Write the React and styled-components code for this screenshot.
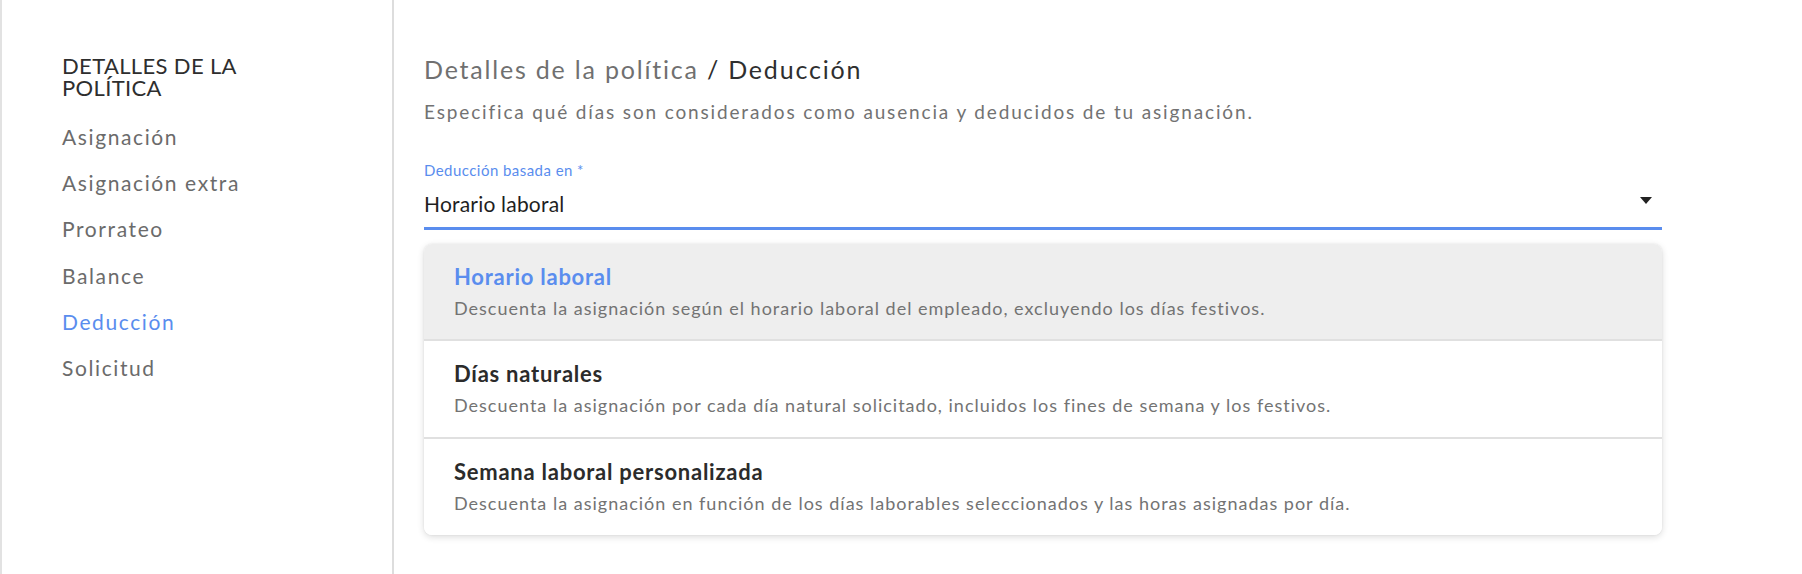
import React from "react";
import styled, { createGlobalStyle } from "styled-components";

const BLUE = "#5a8dee";

const GlobalStyle = createGlobalStyle`
  html, body, #root {
    height: 100%;
  }
  body {
    margin: 0;
    background: #ffffff;
    font-family: Lato, "Noto Sans", sans-serif;
    -webkit-font-smoothing: antialiased;
  }
`;

const Page = styled.div`
  display: flex;
  height: 100%;
  border-left: 2px solid #e2e2e2;
  box-sizing: border-box;
`;

const Sidebar = styled.aside`
  flex-shrink: 0;
  width: 330px;
  border-right: 2px solid #dddddd;
  padding: 55px 0 0 60px;
`;

const SideHeading = styled.h3`
  margin: 0 0 15px;
  width: 200px;
  font-size: 22px;
  line-height: 22px;
  font-weight: 400;
  letter-spacing: 0.35px;
  color: #2e2e2e;
`;

const NavList = styled.nav`
  display: flex;
  flex-direction: column;
`;

const NavItem = styled.a`
  display: block;
  height: 46.2px;
  font-size: 21px;
  line-height: 46.2px;
  letter-spacing: 1.6px;
  color: ${({ $active }) => ($active ? BLUE : "#6b6b6b")};
  cursor: pointer;
`;

const Main = styled.main`
  flex: 1;
  padding: 53px 0 0 30px;
`;

const Content = styled.div`
  width: 1238px;
`;

const Title = styled.h1`
  margin: 0;
  font-size: 25px;
  line-height: 32px;
  font-weight: 400;
  letter-spacing: 1.8px;
  color: #2f2f2f;
`;

const Crumb = styled.span`
  color: #707070;
`;

const Subtitle = styled.p`
  margin: 14px 0 0;
  font-size: 19px;
  line-height: 26px;
  letter-spacing: 1.85px;
  color: #727272;
`;

const Field = styled.div`
  margin-top: 35px;
  border-bottom: 3px solid ${BLUE};
  padding-bottom: 9px;
`;

const FieldLabel = styled.label`
  display: block;
  font-size: 15px;
  line-height: 20px;
  letter-spacing: 0.45px;
  color: ${BLUE};
`;

const ValueRow = styled.div`
  display: flex;
  align-items: center;
  justify-content: space-between;
  margin-top: 10px;
  padding-right: 10px;
`;

const Value = styled.span`
  font-size: 21px;
  line-height: 28px;
  letter-spacing: 0.2px;
  color: #1f1f1f;
`;

const Caret = styled.svg`
  width: 12px;
  height: 7px;
  margin-top: -8px;
  fill: #222222;
`;

const Menu = styled.ul`
  list-style: none;
  margin: 14px 0 0;
  padding: 0;
  background: #ffffff;
  border-radius: 8px;
  overflow: hidden;
  box-shadow: 0 2px 7px rgba(0, 0, 0, 0.14), 0 0 2px rgba(0, 0, 0, 0.08);
`;

const Option = styled.li`
  height: 95px;
  box-sizing: border-box;
  padding: 20px 30px 0;
  background: ${({ $selected }) => ($selected ? "#eeeeee" : "#ffffff")};
  & + & {
    border-top: 2px solid #e0e0e0;
    height: 98px;
  }
`;

const OptionTitle = styled.div`
  font-size: 22px;
  line-height: 26px;
  font-weight: 700;
  letter-spacing: 0.75px;
  color: ${({ $selected }) => ($selected ? BLUE : "#2b2b2b")};
`;

const OptionDesc = styled.div`
  margin-top: 6px;
  font-size: 18px;
  line-height: 24px;
  letter-spacing: 1px;
  color: #737373;
`;

const navItems = [
  "Asignación",
  "Asignación extra",
  "Prorrateo",
  "Balance",
  "Deducción",
  "Solicitud",
];

const options = [
  {
    title: "Horario laboral",
    desc: "Descuenta la asignación según el horario laboral del empleado, excluyendo los días festivos.",
  },
  {
    title: "Días naturales",
    desc: "Descuenta la asignación por cada día natural solicitado, incluidos los fines de semana y los festivos.",
  },
  {
    title: "Semana laboral personalizada",
    desc: "Descuenta la asignación en función de los días laborables seleccionados y las horas asignadas por día.",
  },
];

const App = () => {
  const active = "Deducción";
  const selected = "Horario laboral";

  return (
    <>
      <GlobalStyle />
      <Page>
        <Sidebar>
          <SideHeading>DETALLES DE LA POLÍTICA</SideHeading>
          <NavList>
            {navItems.map((item) => (
              <NavItem key={item} $active={item === active}>
                {item}
              </NavItem>
            ))}
          </NavList>
        </Sidebar>

        <Main>
          <Content>
            <Title>
              <Crumb>Detalles de la política </Crumb>/ Deducción
            </Title>
            <Subtitle>
              Especifica qué días son considerados como ausencia y deducidos de
              tu asignación.
            </Subtitle>

            <Field>
              <FieldLabel>Deducción basada en *</FieldLabel>
              <ValueRow>
                <Value>{selected}</Value>
                <Caret viewBox="0 0 12 7">
                  <path d="M0 0h12L6 7z" />
                </Caret>
              </ValueRow>
            </Field>

            <Menu>
              {options.map((opt) => {
                const isSel = opt.title === selected;
                return (
                  <Option key={opt.title} $selected={isSel}>
                    <OptionTitle $selected={isSel}>{opt.title}</OptionTitle>
                    <OptionDesc>{opt.desc}</OptionDesc>
                  </Option>
                );
              })}
            </Menu>
          </Content>
        </Main>
      </Page>
    </>
  );
};

export default App;
